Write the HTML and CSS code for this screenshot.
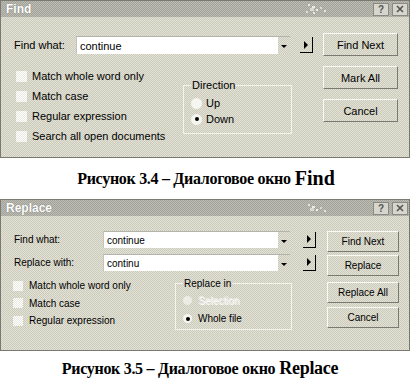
FILE: index.html
```html
<!DOCTYPE html>
<html>
<head>
<meta charset="UTF-8">
<title>Find / Replace</title>
<link rel="stylesheet" href="styles.css">
</head>
<body>

	<div class="dialog find">
		<div class="titlebar">
			<span class="title">Find</span>
			<svg class="sparkle" width="34" height="14" viewBox="0 0 34 14">
				<rect x="6" y="2" width="2" height="2" fill="#e6e6de"/>
				<rect x="10" y="4" width="3" height="2" fill="#ecece4"/>
				<rect x="8" y="6" width="4" height="3" fill="#dadad2"/>
				<rect x="14" y="7" width="2" height="2" fill="#f0f0e8"/>
				<rect x="4" y="9" width="2" height="2" fill="#e0e0d8"/>
				<rect x="18" y="5" width="2" height="2" fill="#d8d8d0"/>
				<rect x="22" y="8" width="2" height="2" fill="#e4e4dc"/>
				<rect x="11" y="10" width="2" height="2" fill="#e8e8e0"/>
			</svg>
			<span class="tb-btn">?</span>
			<span class="tb-btn"><svg width="8" height="8" viewBox="0 0 8 8"><path d="M1 1L7 7M7 1L1 7" stroke="#55554f" stroke-width="1.6"/></svg></span>
		</div>
		<div class="body">
			<div class="main">
				<div class="field-row">
					<span class="field-label">Find what:</span>
					<div class="combo"><span class="combo-text">continue</span><span class="combo-drop"><i class="tri-down"></i></span></div>
					<span class="more-btn"><i class="tri-right"></i></span>
				</div>
				<div class="options">
					<div class="checks">
						<label class="check"><span class="box"></span>Match whole word only</label>
						<label class="check"><span class="box"></span>Match case</label>
						<label class="check"><span class="box"></span>Regular expression</label>
						<label class="check"><span class="box"></span>Search all open documents</label>
					</div>
					<fieldset class="group">
						<legend>Direction</legend>
						<label class="radio"><span class="dot"></span>Up</label>
						<label class="radio"><span class="dot on"></span>Down</label>
					</fieldset>
				</div>
			</div>
			<div class="buttons">
				<button class="btn">Find Next</button>
				<button class="btn">Mark All</button>
				<button class="btn">Cancel</button>
			</div>
		</div>
	</div>

	<div class="caption">
		<span class="cap-ru">Рисунок 3.4 – Диалоговое окно</span>&nbsp;<span class="cap-en">Find</span>
	</div>

	<div class="dialog replace">
		<div class="titlebar">
			<span class="title">Replace</span>
			<svg class="sparkle" width="34" height="14" viewBox="0 0 34 14">
				<rect x="6" y="3" width="2" height="2" fill="#e6e6de"/>
				<rect x="10" y="5" width="3" height="2" fill="#ecece4"/>
				<rect x="8" y="7" width="4" height="3" fill="#dadad2"/>
				<rect x="14" y="8" width="2" height="2" fill="#f0f0e8"/>
				<rect x="18" y="6" width="2" height="2" fill="#d8d8d0"/>
				<rect x="22" y="9" width="2" height="2" fill="#e4e4dc"/>
			</svg>
			<span class="tb-btn">?</span>
			<span class="tb-btn"><svg width="8" height="8" viewBox="0 0 8 8"><path d="M1 1L7 7M7 1L1 7" stroke="#55554f" stroke-width="1.6"/></svg></span>
		</div>
		<div class="body">
			<div class="main">
				<div class="field-row">
					<span class="field-label">Find what:</span>
					<div class="combo"><span class="combo-text">continue</span><span class="combo-drop"><i class="tri-down"></i></span></div>
					<span class="more-btn"><i class="tri-right"></i></span>
				</div>
				<div class="field-row">
					<span class="field-label">Replace with:</span>
					<div class="combo"><span class="combo-text">continu</span><span class="combo-drop"><i class="tri-down"></i></span></div>
					<span class="more-btn"><i class="tri-right"></i></span>
				</div>
				<div class="options">
					<div class="checks">
						<label class="check"><span class="box"></span>Match whole word only</label>
						<label class="check"><span class="box"></span>Match case</label>
						<label class="check"><span class="box"></span>Regular expression</label>
					</div>
					<fieldset class="group">
						<legend>Replace in</legend>
						<label class="radio disabled"><span class="dot"></span>Selection</label>
						<label class="radio"><span class="dot on"></span>Whole file</label>
					</fieldset>
				</div>
			</div>
			<div class="buttons">
				<button class="btn">Find Next</button>
				<button class="btn">Replace</button>
				<button class="btn">Replace All</button>
				<button class="btn">Cancel</button>
			</div>
		</div>
	</div>

	<div class="caption last">
		<span class="cap-ru">Рисунок 3.5 – Диалоговое окно</span>&nbsp;<span class="cap-en">Replace</span>
	</div>

</body>
</html>
```

FILE: styles.css
```css
body {
	margin: 0;
	background: #fff;
	font-family: "Liberation Sans", Arial, sans-serif;
	color: #000;
}

.dialog {
	width: 410px;
	box-sizing: border-box;
	border: 1px solid #7a7a72;
	background: repeating-conic-gradient(#cacac2 0 25%, #e4e3d0 0 50%) 0 0 / 2px 2px;
}

.find {
	height: 158px;
	font-size: 11px;
}

.replace {
	height: 152px;
	font-size: 10px;
}

/* title bar */
.titlebar {
	height: 16px;
	display: flex;
	align-items: center;
	padding: 0 1px 0 5px;
	background: repeating-conic-gradient(#a2a29a 0 25%, #bdbdb4 0 50%) 0 0 / 2px 2px;
}

.title {
	color: #fff;
	font-weight: bold;
	font-size: 12px;
	text-shadow: 0 0 1px #6a6a64;
}

.sparkle {
	margin-left: auto;
	margin-right: 34px;
}

.tb-btn {
	width: 16px;
	height: 13px;
	box-sizing: border-box;
	margin-left: 3px;
	border: 1px solid #8a8a82;
	background: #d6d6ce;
	display: flex;
	align-items: center;
	justify-content: center;
	font-size: 10px;
	font-weight: bold;
	color: #55554f;
}

/* content */
.body {
	display: flex;
	padding: 16px 11px 0 13px;
}

.find .main {
	width: 299px;
}

.replace .body {
	padding: 15px 10px 0 13px;
}

.replace .main {
	width: 302px;
}

.field-row {
	display: flex;
	align-items: center;
	height: 18px;
	margin-top: 3px;
}

.replace .field-row {
	height: 17px;
	margin-top: 0;
	margin-bottom: 6px;
}

.field-label {
	width: 62px;
}

.replace .field-label {
	width: 89px;
}

.combo {
	width: 214px;
	height: 100%;
	box-sizing: border-box;
	display: flex;
	background: #fff;
	border-top: 1px solid #b4b4ac;
	border-left: 1px solid #c4c4bc;
}

.replace .combo {
	width: 187px;
}

.combo-text {
	flex: 1;
	padding-left: 3px;
	display: flex;
	align-items: center;
}

.combo-drop {
	width: 12px;
	display: flex;
	align-items: center;
	justify-content: center;
	background: repeating-conic-gradient(#cacac2 0 25%, #e4e3d0 0 50%) 0 0 / 2px 2px;
}

.tri-down {
	width: 0;
	height: 0;
	border-left: 3px solid transparent;
	border-right: 3px solid transparent;
	border-top: 3px solid #000;
	margin-top: 2px;
}

.more-btn {
	width: 13px;
	height: 16px;
	box-sizing: border-box;
	margin-left: 10px;
	display: flex;
	align-items: center;
	justify-content: center;
	border-right: 1px solid #000;
	border-bottom: 1px solid #000;
}

.replace .more-btn {
	margin-left: 13px;
}

.tri-right {
	width: 0;
	height: 0;
	border-top: 4px solid transparent;
	border-bottom: 4px solid transparent;
	border-left: 4px solid #000;
}

/* options */
.options {
	display: flex;
	align-items: flex-start;
	margin-top: 12px;
	padding-left: 2px;
}

.replace .options {
	margin-top: 2.5px;
	padding-left: 0;
	margin-left: -1px;
}

.checks {
	width: 167px;
}

.replace .checks {
	width: 162px;
}

.check {
	display: flex;
	align-items: center;
	height: 20px;
}

.replace .check {
	height: 17.5px;
}

.box {
	width: 11px;
	height: 11px;
	margin-right: 5px;
	background: repeating-conic-gradient(#fff 0 25%, #e8e8e0 0 50%) 0 0 / 2px 2px;
}

.replace .box {
	width: 10px;
	height: 10px;
	margin-right: 6px;
}

.group {
	width: 109px;
	box-sizing: border-box;
	margin: 12px 0 0 0;
	padding: 3px 0 6px 7px;
	border: 1px solid #f4f4ec;
}

.replace .group {
	width: 117px;
	margin-top: 0;
	padding: 1.5px 0 1px 7px;
}

.group legend {
	padding: 0 1px;
	line-height: 14px;
}

.replace .group legend {
	line-height: 13px;
}

.radio {
	display: flex;
	align-items: center;
	height: 16px;
}

.replace .radio {
	height: 18px;
}

.dot {
	width: 11px;
	height: 11px;
	box-sizing: border-box;
	margin-right: 4px;
	border-radius: 50%;
	background: #f6f6f0;
	display: flex;
	align-items: center;
	justify-content: center;
}

.replace .dot {
	width: 9px;
	height: 9px;
	margin-right: 6px;
}

.dot.on::after {
	content: "";
	width: 4px;
	height: 4px;
	border-radius: 50%;
	background: #000;
}

.radio.disabled {
	color: #eeeee8;
	text-shadow: 1px 1px #fff;
}

.radio.disabled .dot {
	background: #ecece4;
}

/* buttons */
.buttons {
	display: flex;
	flex-direction: column;
	width: 75px;
	margin-left: 10px;
}

.replace .buttons {
	width: 72px;
	margin-left: 11px;
}

.btn {
	height: 23px;
	margin: 0 0 10px 0;
	padding: 0;
	font: inherit;
	color: #000;
	background: transparent;
	border: 1px solid;
	border-color: #fbfbf6 #7a7a72 #7a7a72 #fbfbf6;
}

.replace .btn {
	height: 21px;
	margin: 0;
}

.replace .btn:nth-child(2) {
	margin-top: 3px;
}

.replace .btn:nth-child(3) {
	margin-top: 6px;
}

.replace .btn:nth-child(4) {
	margin-top: 4px;
}

/* captions */
.caption {
	height: 41px;
	display: flex;
	align-items: center;
	justify-content: center;
	font-family: "Liberation Serif", "Times New Roman", serif;
	font-weight: bold;
}

.caption.last {
	height: 35px;
	padding-right: 12px;
}

.cap-ru {
	font-size: 16px;
	letter-spacing: -0.3px;
}

.cap-en {
	font-size: 20px;
}

.caption.last .cap-en {
	font-size: 18px;
	letter-spacing: -0.3px;
}
```
